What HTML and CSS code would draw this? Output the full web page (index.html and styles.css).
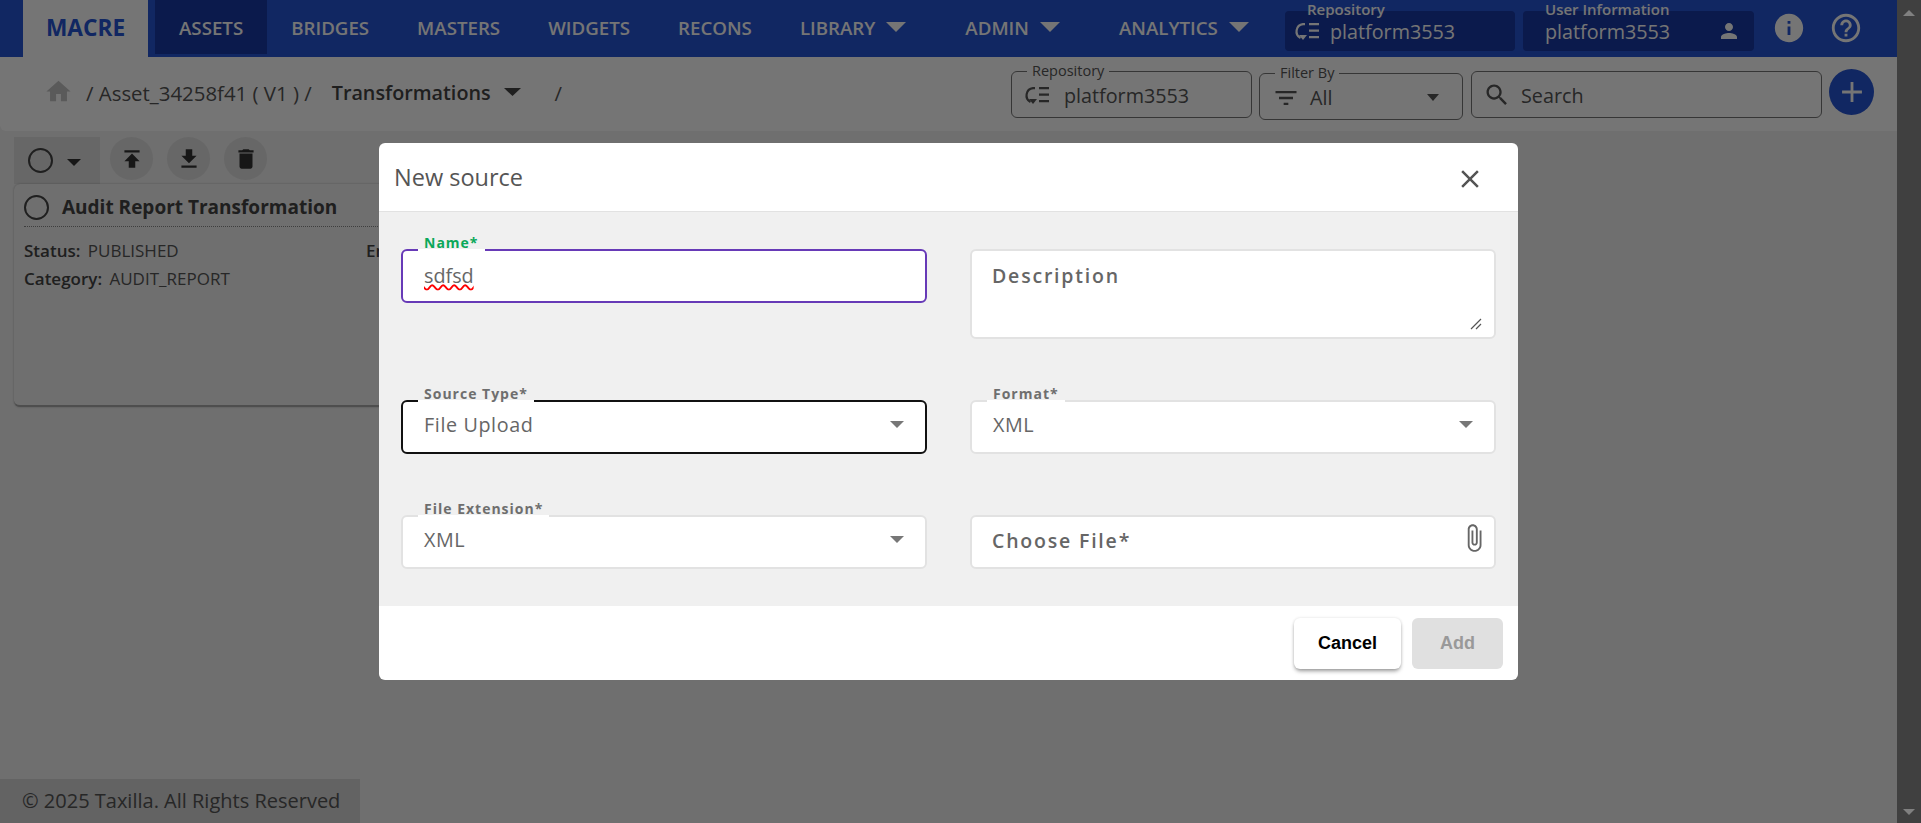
FILE: index.html
```html
<!DOCTYPE html>
<html lang="en">

<head>
    <meta charset="UTF-8">
    <meta name="viewport" content="width=device-width, initial-scale=1.0">
    <title>New source</title>
    <link rel="stylesheet" href="styles.css">
</head>

<body>
    <svg class="sprite" aria-hidden="true">
        <symbol id="i-home" viewBox="0 0 24 24"><path d="M10 20v-6h4v6h5v-8h3L12 3 2 12h3v8z"/></symbol>
        <symbol id="i-caret" viewBox="0 0 10 5" preserveAspectRatio="none"><path d="M0 0l5 5 5-5z"/></symbol>
        <symbol id="i-upload" viewBox="0 0 24 24"><path d="M5 4v2h14V4H5zm0 10h4v6h6v-6h4l-7-7-7 7z"/></symbol>
        <symbol id="i-download" viewBox="0 0 24 24"><path d="M19 9h-4V3H9v6H5l7 7 7-7zM5 18v2h14v-2H5z"/></symbol>
        <symbol id="i-delete" viewBox="0 0 24 24"><path d="M6 19c0 1.1.9 2 2 2h8c1.1 0 2-.9 2-2V7H6v12zM19 4h-3.5l-1-1h-5l-1 1H5v2h14V4z"/></symbol>
        <symbol id="i-person" viewBox="0 0 24 24"><path d="M12 12c2.21 0 4-1.79 4-4s-1.79-4-4-4-4 1.79-4 4 1.79 4 4 4zm0 2c-2.67 0-8 1.34-8 4v2h16v-2c0-2.66-5.33-4-8-4z"/></symbol>
        <symbol id="i-info" viewBox="0 0 24 24"><path d="M12 2C6.48 2 2 6.48 2 12s4.48 10 10 10 10-4.48 10-10S17.52 2 12 2zm1 15h-2v-6h2v6zm0-8h-2V7h2v2z"/></symbol>
        <symbol id="i-help" viewBox="0 0 24 24"><path d="M11 18h2v-2h-2v2zm1-16C6.48 2 2 6.48 2 12s4.48 10 10 10 10-4.48 10-10S17.52 2 12 2zm0 18c-4.41 0-8-3.59-8-8s3.59-8 8-8 8 3.59 8 8-3.59 8-8 8zm0-14c-2.21 0-4 1.79-4 4h2c0-1.1.9-2 2-2s2 .9 2 2c0 2-3 1.75-3 5h2c0-2.25 3-2.5 3-5 0-2.21-1.79-4-4-4z"/></symbol>
        <symbol id="i-filter" viewBox="0 0 24 24"><path d="M10 18h4v-2h-4v2zM3 6v2h18V6H3zm3 7h12v-2H6v2z"/></symbol>
        <symbol id="i-search" viewBox="0 0 24 24"><path d="M15.5 14h-.79l-.28-.27C15.41 12.59 16 11.11 16 9.5 16 5.91 13.09 3 9.5 3S3 5.91 3 9.5 5.91 16 9.5 16c1.61 0 3.09-.59 4.23-1.57l.27.28v.79l5 4.99L20.49 19l-4.99-5zm-6 0C7.01 14 5 11.99 5 9.5S7.01 5 9.5 5 14 7.01 14 9.5 11.99 14 9.5 14z"/></symbol>
        <symbol id="i-add" viewBox="0 0 24 24"><path d="M19 13h-6v6h-2v-6H5v-2h6V5h2v6h6v2z"/></symbol>
        <symbol id="i-close" viewBox="0 0 24 24"><path d="M19 6.41L17.59 5 12 10.59 6.41 5 5 6.41 10.59 12 5 17.59 6.41 19 12 13.41 17.59 19 19 17.59 13.41 12z"/></symbol>
        <symbol id="i-attach" viewBox="0 0 24 24"><path d="M16.5 6v11.5c0 2.21-1.79 4-4 4s-4-1.79-4-4V5c0-1.38 1.12-2.5 2.5-2.5s2.5 1.12 2.5 2.5v10.5c0 .55-.45 1-1 1s-1-.45-1-1V6H10v9.5c0 1.38 1.12 2.5 2.5 2.5s2.5-1.12 2.5-2.5V5c0-2.21-1.79-4-4-4S7 2.79 7 5v12.5c0 3.04 2.46 5.5 5.5 5.5s5.5-2.46 5.5-5.5V6h-1.5z"/></symbol>
        <symbol id="i-repo" viewBox="0 0 25 19"><path d="M11 2.1H9A7.4 7.4 0 0 0 6.5 16" fill="none" stroke="currentColor" stroke-width="2.2"/><path d="M5 13h8l-4 5z"/><path d="M15 1h10v2.2H15zM15 7.5h10v2.2H15zM15 14h10v2.2H15z"/></symbol>
    </svg>

    <div class="shell">
        <div class="page">
            <header class="topbar">
                <div class="brand">MACRE</div>
                <nav class="nav">
                    <a class="nav-item active">ASSETS</a>
                    <a class="nav-item">BRIDGES</a>
                    <a class="nav-item">MASTERS</a>
                    <a class="nav-item">WIDGETS</a>
                    <a class="nav-item">RECONS</a>
                    <a class="nav-item has-menu">LIBRARY <svg class="nav-caret"><use href="#i-caret"/></svg></a>
                    <a class="nav-item has-menu">ADMIN <svg class="nav-caret"><use href="#i-caret"/></svg></a>
                    <a class="nav-item has-menu">ANALYTICS <svg class="nav-caret"><use href="#i-caret"/></svg></a>
                </nav>
                <div class="top-box repo-box">
                    <span class="top-label">Repository</span>
                    <svg class="top-repo-icon"><use href="#i-repo"/></svg>
                    <span class="top-value">platform3553</span>
                </div>
                <div class="top-box user-box">
                    <span class="top-label">User Information</span>
                    <span class="top-value">platform3553</span>
                    <svg class="top-person"><use href="#i-person"/></svg>
                </div>
                <svg class="top-action info"><use href="#i-info"/></svg>
                <svg class="top-action help"><use href="#i-help"/></svg>
            </header>

            <section class="subbar">
                <svg class="crumb-home"><use href="#i-home"/></svg>
                <span class="crumb">/ Asset_34258f41 ( V1 ) /</span>
                <span class="crumb-current">Transformations</span>
                <svg class="crumb-caret"><use href="#i-caret"/></svg>
                <span class="crumb crumb-end">/</span>

                <fieldset class="outlined repo-field">
                    <legend>Repository</legend>
                    <svg class="field-icon"><use href="#i-repo"/></svg>
                    <span>platform3553</span>
                </fieldset>
                <fieldset class="outlined filter-field">
                    <legend>Filter By</legend>
                    <svg class="filter-icon"><use href="#i-filter"/></svg>
                    <span>All</span>
                    <svg class="filter-caret"><use href="#i-caret"/></svg>
                </fieldset>
                <div class="search-box">
                    <svg class="search-icon"><use href="#i-search"/></svg>
                    <span>Search</span>
                </div>
                <button class="add-btn"><svg><use href="#i-add"/></svg></button>
            </section>

            <section class="toolbar">
                <div class="select-all">
                    <span class="radio"></span>
                    <svg class="select-caret"><use href="#i-caret"/></svg>
                </div>
                <button class="tool-btn"><svg><use href="#i-upload"/></svg></button>
                <button class="tool-btn"><svg><use href="#i-download"/></svg></button>
                <button class="tool-btn"><svg><use href="#i-delete"/></svg></button>
            </section>

            <article class="card">
                <div class="card-title">
                    <span class="radio"></span>
                    <h3>Audit Report Transformation</h3>
                </div>
                <div class="card-grid">
                    <p><b>Status:</b> PUBLISHED</p>
                    <p><b>En</b></p>
                    <p><b>Category:</b> AUDIT_REPORT</p>
                </div>
            </article>

            <footer class="copyright">© 2025 Taxilla. All Rights Reserved</footer>

            <div class="backdrop"></div>

            <div class="dialog">
                <div class="dialog-head">
                    <h2>New source</h2>
                    <svg class="dialog-close"><use href="#i-close"/></svg>
                </div>
                <div class="dialog-body">
                    <div class="field focused">
                        <label>Name*</label>
                        <span class="misspelt">sdfsd</span>
                    </div>
                    <div class="field field-area">
                        <span class="placeholder">Description</span>
                        <svg class="grip" viewBox="0 0 12 12"><path d="M1 11L11 1M6 11l5-5" stroke="#555" stroke-width="1.2"/></svg>
                    </div>
                    <div class="field active-select">
                        <label>Source Type*</label>
                        <span>File Upload</span>
                        <svg class="select-arrow"><use href="#i-caret"/></svg>
                    </div>
                    <div class="field">
                        <label>Format*</label>
                        <span>XML</span>
                        <svg class="select-arrow"><use href="#i-caret"/></svg>
                    </div>
                    <div class="field">
                        <label>File Extension*</label>
                        <span>XML</span>
                        <svg class="select-arrow"><use href="#i-caret"/></svg>
                    </div>
                    <div class="field field-file">
                        <span class="placeholder">Choose File*</span>
                        <svg class="attach"><use href="#i-attach"/></svg>
                    </div>
                </div>
                <div class="dialog-foot">
                    <button class="btn btn-cancel">Cancel</button>
                    <button class="btn btn-add" disabled>Add</button>
                </div>
            </div>
        </div>

        <div class="scrollbar">
            <span class="arrow-up"></span>
            <span class="arrow-down"></span>
        </div>
    </div>
</body>

</html>
```

FILE: styles.css
```css
* {
    box-sizing: border-box;
}

body {
    margin: 0;
    font-family: "Open Sans", Arial, sans-serif;
    color: #555;
    background-color: #f1f1f1;
}

svg {
    fill: currentColor;
    display: block;
    flex-shrink: 0;
}

.sprite {
    display: none;
}

.shell {
    display: flex;
    height: 100vh;
    overflow: hidden;
}

.page {
    position: relative;
    flex: 1;
    display: flex;
    flex-direction: column;
    min-width: 0;
}

/* top bar */
.topbar {
    display: flex;
    align-items: flex-start;
    height: 57px;
    padding: 0 34px 0 23px;
    background-color: #2755d5;
    color: #fff;
    flex-shrink: 0;
}

.brand {
    width: 125px;
    height: 57px;
    line-height: 55px;
    text-align: center;
    font-size: 22.7px;
    font-weight: 700;
    color: #2755d5;
    background-color: #fff;
}

.nav {
    display: flex;
    margin-left: 7px;
}

.nav-item {
    display: flex;
    height: 54px;
    padding: 0 24px;
    align-items: center;
    gap: 11px;
    font-size: 18.7px;
    font-weight: 600;
    white-space: nowrap;
}

.nav-item.active {
    background-color: #1839a5;
}

.nav-item.has-menu {
    padding-right: 35px;
}

.nav-caret {
    width: 20px;
    height: 10px;
}

.top-box {
    position: relative;
    display: flex;
    align-items: center;
    flex-shrink: 0;
    height: 40px;
    margin-top: 11px;
    border-radius: 4px;
    background-color: #1839a5;
}

.repo-box {
    width: 230px;
    margin-left: auto;
    padding-left: 9px;
}

.user-box {
    width: 231px;
    margin-left: 8px;
    padding-left: 22px;
}

.top-label {
    position: absolute;
    left: 22px;
    top: -12px;
    font-size: 15px;
    font-weight: 600;
    white-space: nowrap;
}

.top-repo-icon {
    width: 25px;
    height: 19px;
    margin-right: 11px;
}

.top-value {
    font-size: 19.75px;
}

.top-person {
    width: 24px;
    height: 24px;
    margin-left: auto;
    margin-right: 13px;
}

.top-action {
    width: 34px;
    height: 34px;
    margin-top: 11px;
}

.info {
    margin-left: 18px;
}

.help {
    margin-left: 23px;
}

/* breadcrumb bar */
.subbar {
    display: flex;
    align-items: flex-start;
    height: 74px;
    padding-right: 23px;
    background-color: #fff;
    border-bottom-left-radius: 6px;
    flex-shrink: 0;
    font-size: 19.75px;
    color: #555;
}

.crumb-home {
    width: 29px;
    height: 29px;
    margin: 20px 0 0 44px;
    color: #c4c4c4;
}

.crumb {
    margin: 22px 0 0 13px;
    font-size: 20.4px;
}

.crumb-current {
    margin: 22px 0 0 20px;
    font-weight: 600;
    color: #444;
}

.crumb-caret {
    width: 17px;
    height: 8px;
    margin: 31px 0 0 13px;
    color: #444;
}

.crumb-end {
    margin-left: 34px;
}

.outlined {
    display: flex;
    align-items: center;
    margin: 6px 0 0;
    padding: 0 0 5px 12px;
    border: 1px solid #777;
    border-radius: 6px;
    min-width: 0;
}

.outlined legend {
    margin-left: 3px;
    padding: 0 5px;
    font-size: 14.5px;
    line-height: 16px;
}

.repo-field {
    width: 241px;
    height: 55px;
    margin-left: auto;
}

.filter-field {
    width: 204px;
    height: 55px;
    margin: 8px 0 0 7px;
}

.field-icon {
    width: 25px;
    height: 19px;
    margin-right: 15px;
}

.filter-icon {
    width: 28px;
    height: 28px;
    margin-right: 10px;
}

.filter-caret {
    width: 12px;
    height: 7px;
    margin-left: auto;
    margin-right: 23px;
}

.search-box {
    display: flex;
    align-items: center;
    width: 351px;
    height: 47px;
    margin: 14px 0 0 8px;
    padding: 1px 0 0 11px;
    border: 1px solid #777;
    border-radius: 6px;
}

.search-icon {
    width: 28px;
    height: 28px;
    margin-right: 10px;
}

.add-btn {
    width: 45px;
    height: 46px;
    margin: 12px 0 0 7px;
    padding: 0;
    border: none;
    border-radius: 50%;
    color: #fff;
    background-color: #2755d5;
    display: flex;
    align-items: center;
    justify-content: center;
}

.add-btn svg {
    width: 34px;
    height: 34px;
}

/* list */
.toolbar {
    display: flex;
    margin: 6px 0 0 14px;
    height: 47px;
    flex-shrink: 0;
}

.select-all {
    display: flex;
    align-items: center;
    width: 86px;
    height: 47px;
    padding-left: 14px;
    background-color: #e0e0e0;
}

.radio {
    display: block;
    width: 25px;
    height: 25px;
    border: 2px solid #444;
    border-radius: 50%;
    flex-shrink: 0;
}

.select-caret {
    width: 14px;
    height: 7px;
    margin: 3px 0 0 14px;
    color: #333;
}

.tool-btn {
    display: flex;
    align-items: center;
    justify-content: center;
    width: 43px;
    height: 43px;
    margin-left: 10px;
    padding: 0;
    border: none;
    border-radius: 50%;
    color: #333;
    background-color: #e0e0e0;
}

.tool-btn + .tool-btn {
    margin-left: 14px;
}

.tool-btn svg {
    width: 26px;
    height: 26px;
}

.card {
    width: 1490px;
    height: 223px;
    margin-left: 14px;
    padding: 10px 10px;
    border-radius: 6px;
    background-color: #f1f1f1;
    border-bottom: 2px solid #aaa;
    box-shadow: 0 0 2px rgba(0, 0, 0, 0.3);
}

.card-title {
    display: flex;
    align-items: center;
    gap: 13px;
    padding-bottom: 6px;
    border-bottom: 1px dotted #888;
}

.card-title h3 {
    margin: 0;
    font-size: 19px;
    font-weight: 700;
    color: #444;
}

.card-grid {
    display: grid;
    grid-template-columns: 342px 1fr;
    margin-top: 12px;
    font-size: 17px;
    color: #555;
}

.card-grid p {
    margin: 0 0 5px;
    line-height: 23px;
}

.card-grid b {
    font-weight: 600;
    margin-right: 3px;
    color: #444;
}

.copyright {
    margin-top: auto;
    width: 360px;
    height: 44px;
    padding-left: 22px;
    line-height: 44px;
    font-size: 20px;
    background-color: #d7d7d7;
    white-space: nowrap;
}

/* dialog */
.backdrop {
    position: absolute;
    inset: 0;
    background-color: rgba(0, 0, 0, 0.54);
}

.dialog {
    position: absolute;
    left: 379px;
    top: 143px;
    width: 1139px;
    border-radius: 6px;
    background-color: #fff;
    overflow: hidden;
}

.dialog-head {
    display: flex;
    align-items: center;
    justify-content: space-between;
    height: 69px;
    padding: 0 33px 0 15px;
    border-bottom: 1px solid #e2e2e2;
}

.dialog-head h2 {
    margin: 0;
    font-size: 23.5px;
    font-weight: 400;
    color: #555;
}

.dialog-close {
    width: 30px;
    height: 30px;
    margin-top: 4px;
    color: #555;
}

.dialog-body {
    display: grid;
    grid-template-columns: 526px 526px;
    column-gap: 43px;
    row-gap: 61px;
    padding: 37px 22px;
    background-color: #f0f0f0;
}

.field {
    position: relative;
    display: flex;
    align-items: center;
    height: 54px;
    padding: 0 21px 6px;
    border: 2px solid #e2e2e2;
    border-radius: 6px;
    background-color: #fff;
    font-size: 19.75px;
    letter-spacing: 0.6px;
    color: #666;
}

.field label {
    position: absolute;
    left: 15px;
    top: -16px;
    padding: 0 6px;
    font-size: 14px;
    font-weight: 700;
    line-height: 16px;
    letter-spacing: 1px;
    color: #6e6e6e;
    background: linear-gradient(transparent 14px, #fff 14px);
}

.field.focused {
    border-color: #673ab7;
    padding-bottom: 2px;
}

.field.focused label {
    color: #0aa85a;
}

.field.active-select {
    border-color: #111;
}

.misspelt {
    letter-spacing: 0;
    text-decoration: underline wavy red 1.5px;
}

.field-area {
    height: 90px;
    align-items: flex-start;
    padding-top: 11px;
    padding-left: 20px;
}

.field-file {
    padding-bottom: 3px;
    padding-left: 20px;
}

.placeholder {
    font-size: 19.5px;
    font-weight: 600;
    letter-spacing: 1.8px;
}

.grip {
    position: absolute;
    right: 12px;
    bottom: 7px;
    width: 12px;
    height: 12px;
}

.select-arrow {
    position: absolute;
    right: 21px;
    top: 19px;
    width: 14px;
    height: 7px;
    color: #777;
}

.attach {
    position: absolute;
    right: 5px;
    top: 6px;
    width: 30px;
    height: 30px;
    color: #666;
}

.dialog-foot {
    display: flex;
    justify-content: flex-end;
    gap: 11px;
    height: 74px;
    padding: 12px 15px;
}

.btn {
    height: 51px;
    border: none;
    border-radius: 6px;
    font-family: "Liberation Sans", Arial, sans-serif;
    font-size: 18px;
    font-weight: 700;
}

.btn-cancel {
    width: 107px;
    color: #000;
    background-color: #fff;
    box-shadow: 0 3px 4px -1px rgba(0, 0, 0, 0.4), 0 0 3px rgba(0, 0, 0, 0.12);
}

.btn-add {
    width: 91px;
    color: #999;
    background-color: #e0e0e0;
}

/* scrollbar */
.scrollbar {
    display: flex;
    flex-direction: column;
    justify-content: space-between;
    align-items: center;
    width: 24px;
    padding: 10px 0 8px;
    background-color: #404040;
    flex-shrink: 0;
}

.arrow-up {
    border: 6px solid transparent;
    border-top: 0;
    border-bottom: 6px solid #808080;
}

.arrow-down {
    border: 6px solid transparent;
    border-bottom: 0;
    border-top: 6px solid #808080;
}
```
